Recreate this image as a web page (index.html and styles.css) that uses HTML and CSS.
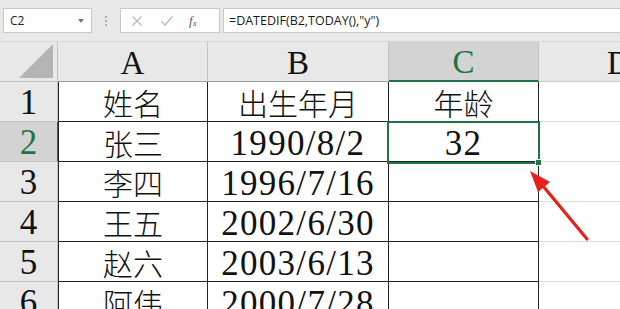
FILE: index.html
```html
<!DOCTYPE html>
<html>
<head>
<meta charset="utf-8">
<link rel="stylesheet" href="styles.css">
</head>
<body>
<div class="app">
  <div class="fbar">
    <div class="namebox"><span class="nb-text">C2</span><span class="dd"></span></div>
    <div class="dots"><i></i><i></i><i></i></div>
    <div class="fxbox">
      <svg class="ico" width="12" height="12" viewBox="0 0 12 12"><path d="M1.5 1.5L10.5 10.5M10.5 1.5L1.5 10.5" stroke="#b9b9b9" stroke-width="1.3" fill="none"/></svg>
      <svg class="ico" width="14" height="12" viewBox="0 0 14 12"><path d="M1.5 6.5L5 10L12.5 1.5" stroke="#b9b9b9" stroke-width="1.3" fill="none"/></svg>
      <span class="fx">f<sub>x</sub></span>
    </div>
    <div class="formula">=DATEDIF(B2,TODAY(),"y")</div>
  </div>
  <div class="sheet">
    <div class="hd corner"><svg width="36" height="36" viewBox="0 0 36 36"><polygon points="1,35 35,1 35,35" fill="#b4b4b4"/></svg></div>
    <div class="hd col">A</div>
    <div class="hd col">B</div>
    <div class="hd col sel">C</div>
    <div class="hd col last">D</div>

    <div class="rh">1</div>
    <div class="c a zh">姓名</div>
    <div class="c zh">出生年月</div>
    <div class="c zh">年龄</div>
    <div class="c d"></div>

    <div class="rh rsel">2</div>
    <div class="c a zh">张三</div>
    <div class="c num">1990/8/2</div>
    <div class="c num">32</div>
    <div class="c d"></div>

    <div class="rh">3</div>
    <div class="c a zh">李四</div>
    <div class="c num">1996/7/16</div>
    <div class="c"></div>
    <div class="c d"></div>

    <div class="rh">4</div>
    <div class="c a zh">王五</div>
    <div class="c num">2002/6/30</div>
    <div class="c"></div>
    <div class="c d"></div>

    <div class="rh">5</div>
    <div class="c a zh">赵六</div>
    <div class="c num">2003/6/13</div>
    <div class="c"></div>
    <div class="c d"></div>

    <div class="rh">6</div>
    <div class="c a zh">阿伟</div>
    <div class="c num">2000/7/28</div>
    <div class="c"></div>
    <div class="c d"></div>
  </div>
  <div class="selection"></div>
  <div class="handle"></div>
  <svg class="arrow" width="620" height="309" viewBox="0 0 620 309">
    <line x1="587" y1="239" x2="543" y2="186" stroke="#e8201a" stroke-width="3.2" stroke-linecap="round"/>
    <polygon points="530,171 550,182 538,192" fill="#e8201a"/>
  </svg>
</div>
</body>
</html>
```

FILE: styles.css
```css
* { box-sizing: border-box; }
html, body { margin: 0; padding: 0; }
body { width: 620px; height: 309px; overflow: hidden; background: #e8e8e8; }
.app { position: relative; width: 620px; height: 309px; overflow: hidden; }

.fbar {
  height: 42px;
  display: flex;
  align-items: flex-start;
  padding: 8px 0 0 3px;
  background: #e8e8e8;
  border-bottom: 1px solid #d8d8d8;
  font-family: "Open Sans", "Liberation Sans", sans-serif;
  font-size: 12px;
  color: #222;
}
.namebox {
  width: 89px; height: 25px;
  background: #fff;
  border: 1px solid #c9c9c9;
  display: flex; align-items: center; justify-content: space-between;
  padding: 0 7px 0 6px;
}
.dd { width: 0; height: 0; border-left: 3.5px solid transparent; border-right: 3.5px solid transparent; border-top: 4px solid #777; }
.dots { width: 28px; height: 25px; display: flex; flex-direction: column; align-items: center; justify-content: center; gap: 2px; }
.dots i { width: 2px; height: 2px; background: #b0b0b0; display: block; }
.fxbox {
  width: 100px; height: 25px;
  background: #fff;
  border: 1px solid #c9c9c9;
  display: flex; align-items: center;
  padding-left: 10px; gap: 17px;
}
.fx { font-family: "Liberation Serif", serif; font-style: italic; font-size: 13px; color: #555; margin-left: -2px; }
.fx sub { font-size: 9px; vertical-align: -1px; }
.formula {
  flex: 1; height: 25px; margin-left: 3px;
  background: #fff;
  border: 1px solid #c9c9c9; border-right: none;
  display: flex; align-items: center;
  padding-left: 5px;
  font-size: 12.5px; color: #1a1a1a;
}

.sheet {
  display: grid;
  grid-template-columns: 58px 150px 181px 150px 160px;
  grid-template-rows: 40px repeat(6, 40px);
  background: #fff;
  font-family: "Liberation Serif", "Noto Sans CJK SC", serif;
  color: #111;
}
.hd {
  background: #e8e8e8;
  border-right: 1px solid #c4c4c4;
  border-bottom: 1px solid #9e9e9e;
  display: flex; align-items: center; justify-content: center;
  font-size: 33px; color: #111; padding-top: 3px;
}
.hd.corner { align-items: flex-end; justify-content: flex-end; padding: 0 3px 2px 0; border-bottom-color: #c4c4c4; }
.hd.sel { background: #d3d3d3; color: #217346; border-bottom: 2px solid #217346; }
.hd.last { border-right: none; justify-content: flex-start; padding-left: 68px; border-bottom-color: #c8c8c8; }
.rh {
  background: #e8e8e8;
  border-right: 1px solid #c4c4c4;
  border-bottom: 1px solid #c4c4c4;
  display: flex; align-items: center; justify-content: center;
  font-size: 35px; padding-top: 3px;
}
.rh.rsel { background: #d3d3d3; color: #217346; border-right: 1px solid #217346; }
.c {
  border-right: 1px solid #222;
  border-bottom: 1px solid #222;
  display: flex; align-items: center; justify-content: center;
}
.c.a { border-left: 1px solid #222; }
.c.d { border-right: none; border-bottom: 1px solid #dadada; }
.zh { font-family: "Noto Sans CJK SC", sans-serif; font-size: 30px; font-weight: 300; padding-top: 1px; }
.num { font-size: 35px; letter-spacing: 1.3px; padding-top: 4px; }

.selection {
  position: absolute; left: 387px; top: 121px; width: 153px; height: 43px;
  border: 2px solid #217346;
}
.handle {
  position: absolute; left: 535px; top: 159px; width: 7px; height: 7px;
  background: #217346; border: 1px solid #fff;
}
.arrow { position: absolute; left: 0; top: 0; }
```
